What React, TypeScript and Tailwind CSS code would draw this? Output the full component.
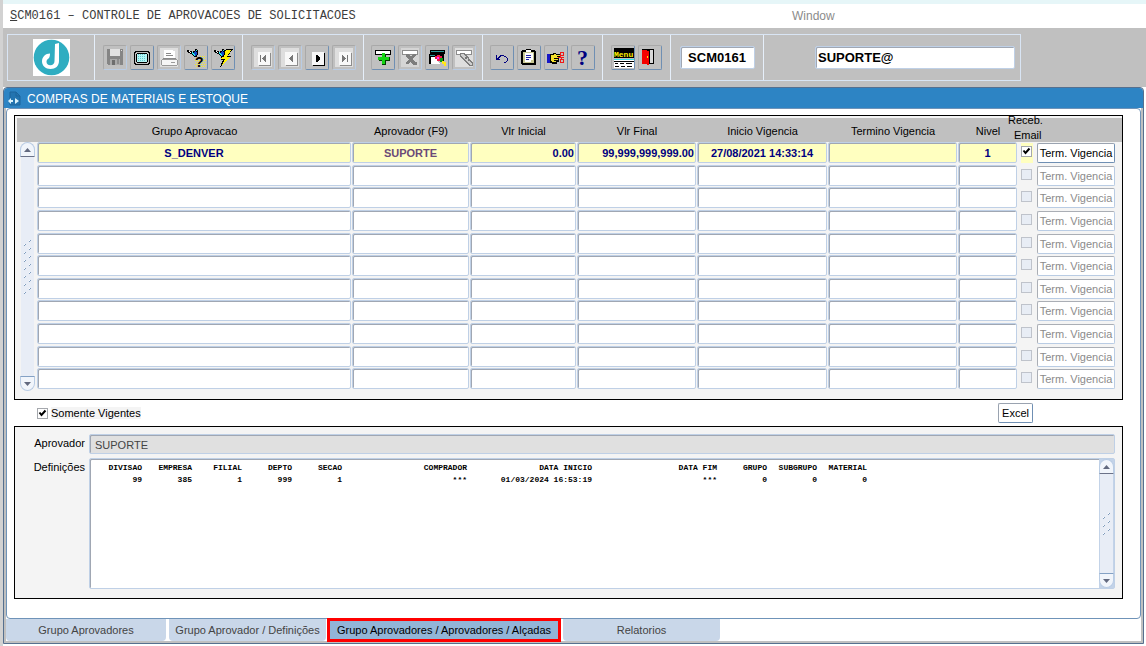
import React from 'react';

interface Column {
  title: string;
  width: string;
  align: string;
}

interface ToolProps {
  label: string;
  disabled?: boolean;
  children: React.ReactNode;
}

const columns: Column[] = [
  { title: 'Grupo Aprovacao', width: '', align: 'text-center' },
  { title: 'Aprovador (F9)', width: 'w-[118px]', align: 'text-center' },
  { title: 'Vlr Inicial', width: 'w-[107px]', align: 'text-right' },
  { title: 'Vlr Final', width: 'w-[120px]', align: 'text-right' },
  { title: 'Inicio Vigencia', width: 'w-[131px]', align: 'text-center' },
  { title: 'Termino Vigencia', width: 'w-[130px]', align: 'text-center' },
  { title: 'Nivel', width: 'w-[60px]', align: 'text-center' },
];

const rows: string[][] = [
  ['S_DENVER', 'SUPORTE', '0.00', '99,999,999,999.00', '27/08/2021 14:33:14', '', '1'],
  ...Array.from({ length: 10 }, () => ['', '', '', '', '', '', '']),
];

const definitions = [
  { title: 'DIVISAO', value: '99', width: 'w-[50px]' },
  { title: 'EMPRESA', value: '385', width: 'w-[50px]' },
  { title: 'FILIAL', value: '1', width: 'w-[50px]' },
  { title: 'DEPTO', value: '999', width: 'w-[50px]' },
  { title: 'SECAO', value: '1', width: 'w-[50px]' },
  { title: 'COMPRADOR', value: '***', width: 'w-[125px]' },
  { title: 'DATA INICIO', value: '01/03/2024 16:53:19', width: 'w-[125px]' },
  { title: 'DATA FIM', value: '***', width: 'w-[125px]' },
  { title: 'GRUPO', value: '0', width: 'w-[50px]' },
  { title: 'SUBGRUPO', value: '0', width: 'w-[50px]' },
  { title: 'MATERIAL', value: '0', width: 'w-[50px]' },
];

const field = 'border border-[#bfd0e6] rounded-xs outline-none shadow-[inset_1px_1px_0_#a0a7b3]';

const Tool: React.FC<ToolProps> = ({ label, disabled, children }) => (
  <button
    type="button"
    aria-label={label}
    disabled={disabled}
    className={`w-6 h-[25px] shrink-0 rounded-xs border border-t-[#a9a9a9] border-l-[#a9a9a9] ${
      disabled ? 'border-r-[#b9cce4] border-b-[#b9cce4]' : 'border-r-[#6f8fb3] border-b-[#6f8fb3]'
    }`}
  >
    <svg width="22" height="23" viewBox="1 1 22 23" shapeRendering="crispEdges">
      {children}
    </svg>
  </button>
);

const Page = ({ color, d }: { color: string; d: string }) => (
  <>
    {color !== '#000' && <path d="M3 3h18v19H3z" fill="#dedede" />}
    <path d="M8 8h12v13H8z" fill={color === '#000' ? '#000' : '#8c8c8c'} />
    <path d="M7 7h12v13H7z" fill="#f8f8f8" />
    <path d={d} fill={color} />
  </>
);

const Torch = () => (
  <>
    <path d="M3 5h2v1h3v1h1V6h2V4h2v1h1v5h-1v2h-3v-1H9v-1H8V9H6V8H4V7H3z" fill="#000" />
    <path d="M5 6h1v1h1v1H6V7H5z" fill="#fff" />
    <path d="M8 7h1v1h1v1h1v2h-1v-1H9V9H8z" fill="#22e5ee" />
    <path d="M11 6h1v1h1v3h-1v1h-1V9h-1V7h1z" fill="#1048c8" />
    <path d="M12 5h1v1h-1z" fill="#22e5ee" />
  </>
);

const Section = ({ width, children }: { width: string; children: React.ReactNode }) => (
  <div className={`${width} flex items-center justify-center gap-[3px] border-r border-[#e6effa]`}>{children}</div>
);

const Toolbar = () => (
  <div className="bg-[#c0c0c0] pt-1.5 pb-1.5 px-1">
    <div className="flex h-[47px] w-full max-w-[1014px] border border-r-0 border-[#d9e5f4]">
      <Section width="w-[87px]">
        <svg width="37" height="37" viewBox="0 0 37 37" role="img" aria-label="Logo">
          <path d="M0 0h37v37H0z" fill="#fff" />
          <circle cx="18.500" cy="18.500" r="17.800" fill="#2fadc1" />
          <path d="M22 5L26 4V22C26 27 22.500 30 17.500 30C12.500 30 9 26.500 9 22.500C9 18 12.500 14.500 17 14.500C17 17 16.500 18.500 15.500 19.500C14 20.500 13.500 21.500 13.500 22.800C13.500 24.800 15 26.300 17.300 26.300C20 26.300 21.500 24.500 21.500 22Z" fill="#fff" />
        </svg>
      </Section>
      <Section width="w-[148px]">
        <Tool label="Salvar" disabled>
          <path d="M4 4h16v16H5v-1H4z" fill="#858585" />
          <path d="M7 4h10v7H7z" fill="#e2e2e2" />
          <path d="M18 5h1v1h-1z" fill="#ddd" />
          <path d="M7 14h10v6H7z" fill="#aaa" />
          <path d="M9 15h3v5H9z" fill="#6d6d6d" />
          <path d="M14 14h2v5h-2z" fill="#8d8d8d" />
        </Tool>
        <Tool label="Tela">
          <path d="M5 6h14v1h1v12h-1v1H5v-1H4V7h1z" fill="#000" />
          <path d="M6 7h12v1h1v10h-1v1H6v-1H5V8h1z" fill="#c0c0c0" />
          <path d="M7 8h10v1h1v8h-1v1H7v-1H6V9h1z" fill="#000" />
          <path d="M7 9h10v8H7z" fill="#b4f6f6" />
          <path d="M8.500 9v8M10.500 9v8M12.500 9v8M14.500 9v8" stroke="#62c9ce" strokeDasharray="1 1" />
        </Tool>
        <Tool label="Imprimir" disabled>
          <path d="M3 3h18v19H3z" fill="#dedede" />
          <path d="M7 5h9v1h2v8H7z" fill="#fff" />
          <path d="M9 8h5v1H9zM9 10h7v1H9zM6 13h13v1H6z" fill="#8a8a8a" />
          <path d="M5 15h15v6H5z" fill="#f6f6f6" />
          <path d="M5 14h15v1H5zM4 15h1v5H4zM20 15h1v5h-1zM5 20h15v1H5zM14 17h4v1h-4z" fill="#9b9b9b" />
        </Tool>
        <Tool label="Consultar">
          <path d="M12 13.500h10M11 15.500h11M12 17.500h10M11 19.500h11M12 21.500h10M16 11.500h5" stroke="#f5ed22" strokeDasharray="1 1" />
          <Torch />
          <text x="11" y="22" fontSize="14" fontWeight="700" fontFamily="Liberation Sans, sans-serif">?</text>
        </Tool>
        <Tool label="Executar consulta">
          <path d="M15 4H22L17 11H21L9 22L12 15H10V13L13 9Z" fill="#000" />
          <path d="M15 5H20L16 12H19L11 20L14 14H10L14 8Z" fill="#fff200" />
          <Torch />
        </Tool>
      </Section>
      <Section width="w-[121px]">
        <Tool label="Primeiro" disabled><Page color="#777" d="M9 10h1v7H9zM14 10h1v7h-1v-1h-1v-1h-1v-1h-1v-1h1v-1h1v-1h1z" /></Tool>
        <Tool label="Anterior" disabled><Page color="#777" d="M14 10h1v7h-1v-1h-1v-1h-1v-1h-1v-1h1v-1h1v-1h1z" /></Tool>
        <Tool label="Proximo"><Page color="#000" d="M11 10h2v1h1v1h1v3h-1v1h-1v1h-2z" /></Tool>
        <Tool label="Ultimo" disabled><Page color="#777" d="M10 10h1v1h1v1h1v1h1v1h-1v1h-1v1h-1v1h-1zM15 10h1v7h-1z" /></Tool>
      </Section>
      <Section width="w-[119px]">
        <Tool label="Inserir">
          <path d="M4 5h16v5H4z" fill="#000" />
          <path d="M5 6h14v3H5z" fill="#fff" />
          <path d="M11 9h4v3h4v4h-4v4h-4v-4H8v-1h3z" fill="#003b00" />
          <path d="M11 8h3v4h4v3h-4v4h-3v-4H7v-3h4z" fill="#14d414" />
        </Tool>
        <Tool label="Excluir" disabled>
          <path d="M3 3h18v19H3z" fill="#d5d5d5" />
          <path d="M4 5h16v5H4z" fill="#8c8c8c" />
          <path d="M5 6h14v3H5z" fill="#fff" />
          <path d="M8 9h3v1h1v1h2v-1h1V9h3v2h-1v1h-1v1h-1v2h1v1h1v1h2v3h-4v-1h-1v-1h-1v-1h-1v1h-1v1H8v-2h1v-1h1v-1h1v-1h-1v-1H9v-1H8z" fill="#7d7d7d" />
        </Tool>
        <Tool label="Editar">
          <path d="M5 5h15v4H5zM4 9h15v10h-1v-6H6v6H4z" fill="#000" />
          <path d="M6 6h13v1H6zM5 10h5v1H5z" fill="#2e9999" />
          <path d="M6 12h6v3l3 4H6z" fill="#fff" />
          <path d="M10 11h2v-1h3v1h2v3h-2v2h-3v-2h-2z" fill="#f01848" />
          <path d="M12 12h2v2h-2z" fill="#f3f" />
          <path d="M15 13h3v4h-3z" fill="#0a9b17" />
          <path d="M17 16h2v1h2v4h-2v-2h-2z" fill="#ffe817" />
        </Tool>
        <Tool label="Localizar" disabled>
          <path d="M3 3h18v19H3z" fill="#dedede" />
          <path d="M4 5h16v5H4z" fill="#8c8c8c" />
          <path d="M5 6h14v3H5z" fill="#fff" />
          <path d="M8 8h5l8 10v3h-3L8 12z" fill="#7d7d7d" />
          <path d="M9 9h3l8 10v1h-2L9 11z" fill="#cfcfcf" />
          <path d="M13 12h2v2h-2zM16 15h1v1h-1z" fill="#777" />
        </Tool>
      </Section>
      <Section width="w-[120px]">
        <Tool label="Desfazer">
          <path d="M6 10h1v3h1v-1h1v-1h1v-1h4v1h2v1h1v1h1v3h-1v1h-1v1h-2v-1h2v-1h1v-3h-1v-1h-2v-1h-3v1h-1v1H9v1h1v1H6z" fill="#000080" />
        </Tool>
        <Tool label="Area de transferencia">
          <path d="M5 5h4V4h5v1h4v1h1v14H5v-1H4V6h1z" fill="#000" />
          <path d="M6 7h11v11H6z" fill="#c9c995" />
          <path d="M9 5h5v2H9zM8 8h8v7h-2v2H8z" fill="#fff" />
          <path d="M9 10.500h5M9 12.500h5M9 14.500h3" stroke="#2323a8" />
        </Tool>
        <Tool label="Lista de valores">
          <path d="M3 9h3v9H3z" fill="#1717c6" />
          <path d="M6 9h3V8h3v1h5v3h-2v5h-2v2H8v-1H6z" fill="#000" />
          <path d="M7 10h3V9h2v1h4v1h-3v1h1v1h-1v1h1v1h-2v2H8v-1H7z" fill="#f2df2b" />
          <path d="M10 13.500h3M10 15.500h2" stroke="#000" />
          <path d="M16 7.500h3v3h-3zM16 14.500h3v3h-3zM14 12.500h6M16 10.500l2 4" fill="none" stroke="#f01818" />
        </Tool>
        <Tool label="Ajuda">
          <text x="6" y="20" fontSize="22" fontWeight="700" fill="#000080" fontFamily="Liberation Serif, serif">?</text>
        </Tool>
      </Section>
      <Section width="w-[68px]">
        <Tool label="Menu">
          <path d="M3 3h20v10H3z" fill="#000" />
          <text x="3" y="12" fontSize="8" fontWeight="700" fill="#fff200" fontFamily="Liberation Mono, monospace">Menu</text>
          <path d="M3 14h20v1H3z" fill="#32e6ee" />
          <path d="M3 15h20v8H3z" fill="#fff" />
          <path d="M3 16h20v1H3zM4 18h3v1H4zM9 18h4v1H9zM15 18h6v1h-6zM4 21h4v1H4zM10 21h4v1h-4zM16 21h5v1h-5z" fill="#000" />
        </Tool>
        <Tool label="Sair">
          <path d="M4 4h12v15H4z" fill="#000" />
          <path d="M11 5h4v13h-4z" fill="#d8d8d8" />
          <path d="M4 5h5v1h2v14H9v-1H4z" fill="#f40000" />
          <path d="M9 11h1v2H9z" fill="#ffe400" />
          <path d="M11 5h1v14h-1z" fill="#000" />
        </Tool>
      </Section>
      <Section width="w-[93px]">
        <input aria-label="Programa" readOnly defaultValue="SCM0161" className={`${field} w-[75px] h-[23px] bg-white text-center text-[13px] font-bold`} />
      </Section>
      <div className="flex flex-1 items-center justify-end border-r border-[#d9e5f4] pr-[5px]">
        <input aria-label="Usuario" readOnly defaultValue="SUPORTE@" className={`${field} w-[200px] h-[23px] bg-white px-0.5 text-[13px] font-bold`} />
      </div>
    </div>
  </div>
);

const Tick = ({ id, checked, disabled, label }: { id?: string; checked?: boolean; disabled?: boolean; label?: string }) => (
  <span className="relative block w-[11px] h-[11px] shrink-0">
    <input
      id={id}
      type="checkbox"
      aria-label={label}
      defaultChecked={checked}
      disabled={disabled}
      className="peer block appearance-none w-[11px] h-[11px] border border-[#a5a8ad] bg-white disabled:border-[#bfc3cb] disabled:bg-[#e8edf5]"
    />
    <svg className="absolute inset-0 hidden pointer-events-none peer-checked:block" width="11" height="11" viewBox="0 0 11 11">
      <path d="M2.500 4.500L4.500 7L8.500 2.500" fill="none" stroke="#000" strokeWidth="2" />
    </svg>
  </span>
);

const ScrollBar = ({ height, grips }: { height: string; grips: number }) => (
  <div className={`${height} w-[15px] flex flex-col items-center justify-between`}>
    <button type="button" aria-label="Subir" className="w-full h-[15px] flex items-center justify-center rounded-t-lg border border-[#b9cce4] border-b-[#6b7288] bg-[#f1f5fb]">
      <svg width="7" height="4" viewBox="0 0 7 4"><path d="M3.500 0L7 4H0z" fill="#62697f" /></svg>
    </button>
    <div className="w-[13px] flex flex-1 flex-col items-center justify-center bg-[#e8edf6]">
      {Array.from({ length: grips }, (_, i) => (
        <svg key={i} width="8" height="8" viewBox="0 0 8 8" shapeRendering="crispEdges">
          <path d="M6 1h1v1H6zM5 2h1v1H5zM1 5h1v1H1zM0 6h1v1H0z" fill="#7f9cbd" />
          <path d="M5 1h1v1H5zM0 5h1v1H0z" fill="#fff" />
        </svg>
      ))}
    </div>
    <button type="button" aria-label="Descer" className="w-full h-[15px] flex items-center justify-center rounded-b-lg border border-[#b9cce4] border-t-[#84a1c4] bg-[#f1f5fb]">
      <svg width="7" height="4" viewBox="0 0 7 4"><path d="M0 0H7L3.500 4z" fill="#62697f" /></svg>
    </button>
  </div>
);

const ApprovalTable = () => (
  <div className="border border-black bg-[#f4f4f4] pt-0.5 pl-0.5 pb-2">
    <table className="w-full table-fixed border-collapse">
      <colgroup>
        <col className="w-5" />
        {columns.map((column) => (
          <col key={column.title} className={column.width} />
        ))}
        <col className="w-[18px]" />
        <col className="w-[86px]" />
      </colgroup>
      <thead>
        <tr className="h-6 bg-[#c0c0c0]">
          <th className="p-0" />
          {columns.map((column) => (
            <th key={column.title} className="p-0 pt-px text-center font-normal leading-4">{column.title}</th>
          ))}
          <th className="relative p-0 font-normal">
            <span className="absolute -left-2.5 -top-[5px] text-left leading-[15px]">
              <span className="block">Receb.</span>
              <span className="block pl-1.5">Email</span>
            </span>
          </th>
          <th className="p-0" />
        </tr>
      </thead>
      <tbody>
        {rows.map((row, index) => (
          <tr key={index} className="h-[22px]">
            {index === 0 && (
              <td rowSpan={rows.length} className="p-0 pl-[3px] align-top">
                <ScrollBar height="h-[249px]" grips={7} />
              </td>
            )}
            {row.map((value, i) => (
              <td key={i} className="p-0 pr-px align-top">
                <input
                  aria-label={columns[i].title}
                  readOnly
                  defaultValue={value}
                  className={`${field} ${columns[i].align} block w-full h-[21px] px-px pt-px font-bold ${
                    index === 0 ? 'bg-[#ffffc0]' : 'bg-white'
                  } ${i === 1 ? 'text-[#6b4a78]' : 'text-[#000080]'}`}
                />
              </td>
            ))}
            <td className="p-0 pt-px align-top">
              <div className={`ml-[3px] w-3 h-5 pt-[3px] ${index === 0 ? 'bg-[#ffffc0]' : ''}`}>
                <Tick label="Receb. Email" checked={index === 0} disabled={index > 0} />
              </div>
            </td>
            <td className="p-0 pl-px pr-[7px] pt-px align-top">
              <button
                type="button"
                disabled={index > 0}
                className={`block w-full h-5 rounded-xs border bg-white whitespace-nowrap leading-4 ${
                  index === 0
                    ? 'border-t-[#9aa3b0] border-l-[#9aa3b0] border-r-[#6f8fb3] border-b-[#6f8fb3] text-black'
                    : 'border-t-[#aaaeb5] border-l-[#aaaeb5] border-r-[#b9cce4] border-b-[#b9cce4] text-[#8b8b8b]'
                }`}
              >
                Term. Vigencia
              </button>
            </td>
          </tr>
        ))}
      </tbody>
    </table>
  </div>
);

const Details = () => (
  <div className="border border-black bg-[#f4f4f4] pt-[7px] pr-[7px] pb-[9px]">
    <div className="flex">
      <label htmlFor="aprovador" className="w-[74px] pr-1 shrink-0 text-right leading-[18px]">Aprovador</label>
      <input id="aprovador" readOnly defaultValue="SUPORTE" className={`${field} flex-1 h-5 bg-[#e0e0e0] px-[5px] pt-px text-[#444]`} />
    </div>
    <div className="flex mt-1">
      <span id="definicoes" className="w-[74px] pr-1 shrink-0 text-right leading-[18px]">Definições</span>
      <div className={`${field} flex flex-1 justify-between bg-white`}>
        <div className="pl-0.5 pt-[3px]">
          <table aria-labelledby="definicoes" className="table-fixed border-collapse w-[775px] font-['Liberation_Mono',monospace] text-[8px] font-bold leading-3 text-right whitespace-nowrap">
            <thead>
              <tr>
                {definitions.map((item) => (
                  <th key={item.title} className={`${item.width} p-0 text-right`}>{item.title}</th>
                ))}
              </tr>
            </thead>
            <tbody>
              <tr>
                {definitions.map((item) => (
                  <td key={item.title} className="p-0">{item.value}</td>
                ))}
              </tr>
            </tbody>
          </table>
        </div>
        <div className="bg-[#c3d3e8]">
          <ScrollBar height="h-[129px]" grips={3} />
        </div>
      </div>
    </div>
  </div>
);

const Tabs = () => (
  <div role="tablist" className="flex h-[22px]">
    <button type="button" role="tab" className="w-40 rounded-b bg-[#c9d7e9] text-[#444]">Grupo Aprovadores</button>
    <button type="button" role="tab" className="ml-[3px] w-[157px] rounded-b bg-[#c9d7e9] whitespace-nowrap text-[#444]">Grupo Aprovador / Definições</button>
    <button type="button" role="tab" aria-selected="true" className="-my-px ml-px w-[234px] border-3 border-[#ff0000] bg-[#92b5d7] whitespace-nowrap text-black">
      Grupo Aprovadores / Aprovadores / Alçadas
    </button>
    <button type="button" role="tab" className="ml-0.5 w-[157px] rounded-b bg-[#c9d7e9] text-[#444]">Relatorios</button>
  </div>
);

const App: React.FC = () => {
  return (
    <div className="min-h-screen bg-white border-l-3 border-[#d2d2d2] font-['Liberation_Sans',Arial,sans-serif] text-[11px] text-black">
      <div className="h-1 bg-[#e6f6f8]" />
      <header className="flex items-center h-6 pl-[7px] text-xs text-[#3c3c3c]">
        <h1 className="w-[782px] font-['Liberation_Mono',monospace]">
          <span className="underline">S</span>CM0161 – CONTROLE DE APROVACOES DE SOLICITACOES
        </h1>
        <button type="button" className="text-[#8b8b8b]">Window</button>
      </header>
      <Toolbar />
      <main className="mr-0.5 rounded-t border border-[#56708f] bg-[#c0c0c0]">
        <div className="flex items-center h-5 gap-1.5 rounded-t bg-[#2d84c4] pl-1 pt-px text-xs text-white">
          <svg width="13" height="15" viewBox="0 0 13 15">
            <path d="M2 1H8L12 5V14H2z" fill="#2374b0" stroke="#1d659c" />
            <path d="M8 1V5H12" fill="none" stroke="#1d659c" />
            <path d="M0 10L3 7V9H5V11H3V13zM7 7L11 10L7 13z" fill="#d9f2fc" />
          </svg>
          <h2>COMPRAS DE MATERIAIS E ESTOQUE</h2>
        </div>
        <div className="mx-0.5 mb-0.5 bg-white">
          <div className="rounded border border-[#6f93b8] pt-1.5 pl-[7px] pr-[17px] pb-[19px]">
            <ApprovalTable />
            <div className="flex items-center justify-between h-[26px] pl-[23px] pr-[90px]">
              <div className="flex items-center gap-[3px]">
                <Tick id="vigentes" checked />
                <label htmlFor="vigentes" className="bg-[#f4f4f4] leading-3">Somente Vigentes</label>
              </div>
              <button type="button" className="w-[35px] h-5 rounded-xs border border-t-[#9aa3b0] border-l-[#9aa3b0] border-r-[#6f8fb3] border-b-[#6f8fb3] bg-white">Excel</button>
            </div>
            <Details />
          </div>
          <Tabs />
        </div>
      </main>
    </div>
  );
};

export default App;
